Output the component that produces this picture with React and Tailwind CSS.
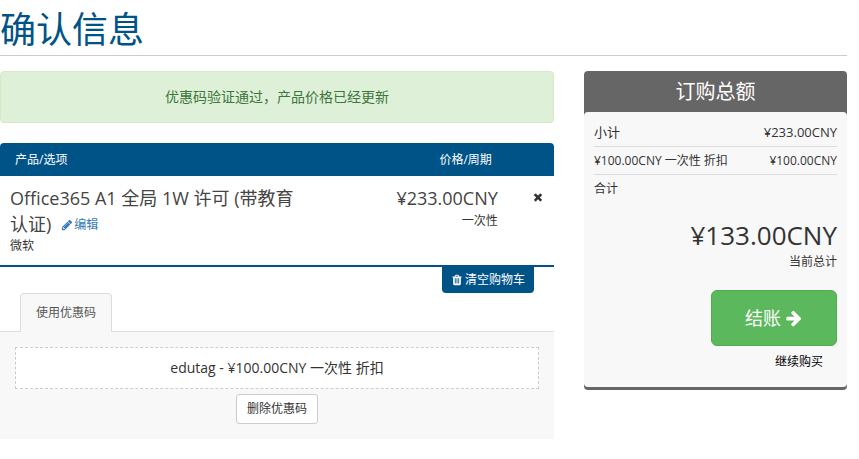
import React from 'react';

const ICONS = {
    pencil: 'M491 1536l91-91-235-235-91 91v107h128v128h107zm523-928q0-22-22-22-10 0-17 7l-542 542q-7 7-7 17 0 22 22 22 10 0 17-7l542-542q7-7 7-17zm-54-192l416 416-832 832h-416v-416zm683 96q0 53-37 90l-166 166-416-416 166-165q36-38 90-38 53 0 91 38l235 234q37 39 37 91z',
    times: 'M1490 1322q0 40-28 68l-136 136q-28 28-68 28t-68-28l-294-294-294 294q-28 28-68 28t-68-28l-136-136q-28-28-28-68t28-68l294-294-294-294q-28-28-28-68t28-68l136-136q28-28 68-28t68 28l294 294 294-294q28-28 68-28t68 28l136 136q28 28 28 68t-28 68l-294 294 294 294q28 28 28 68z',
    trash: 'M704 1376v-704q0-14-9-23t-23-9h-64q-14 0-23 9t-9 23v704q0 14 9 23t23 9h64q14 0 23-9t9-23zm256 0v-704q0-14-9-23t-23-9h-64q-14 0-23 9t-9 23v704q0 14 9 23t23 9h64q14 0 23-9t9-23zm256 0v-704q0-14-9-23t-23-9h-64q-14 0-23 9t-9 23v704q0 14 9 23t23 9h64q14 0 23-9t9-23zm-544-992h448l-48-117q-7-9-17-11h-317q-10 2-17 11zm928 32v64q0 14-9 23t-23 9h-96v948q0 83-47 143.500t-113 60.500h-832q-66 0-113-58.500t-47-141.500v-952h-96q-14 0-23-9t-9-23v-64q0-14 9-23t23-9h309l70-167q15-37 54-63t79-26h320q40 0 79 26t54 63l70 167h309q14 0 23 9t9 23z',
    arrow: 'M1600 960q0 54-37 91l-651 651q-39 37-91 37-51 0-90-37l-75-75q-38-38-38-91t38-91l293-293h-704q-52 0-84.500-37.500t-32.500-90.500v-128q0-53 32.500-90.500t84.500-37.500h704l-293-294q-38-36-38-90t38-90l75-75q38-38 90-38 53 0 91 38l651 651q37 35 37 90z',
};

const Icon = ({ name, className }) => (
    <svg viewBox="0 0 1792 1792" fill="currentColor" aria-hidden="true" className={className}>
        <path d={ICONS[name]} />
    </svg>
);

const summaryRows = [
    { label: '小计', amount: '¥233.00CNY', size: 'text-[13px]' },
    { label: '¥100.00CNY 一次性 折扣', amount: '¥100.00CNY', size: 'text-xs' },
];

const CartItems = () => (
    <section>
        <div className="grid grid-cols-12 rounded-t bg-[#005387] text-xs leading-[33px] text-white">
            <div className="col-span-7 pl-[15px]">产品/选项</div>
            <div className="col-span-4 pr-4 text-right">价格/周期</div>
        </div>
        <div className="grid grid-cols-12 border-b-2 border-[#005387] pt-[9px] pb-2.5">
            <div className="col-span-7 pl-2.5 pr-[15px]">
                <div className="text-lg leading-[26px] text-[#444]">
                    <h2 className="inline">Office365 A1 全局 1W 许可 (带教育认证)</h2>
                    <a href="#edit" className="ml-2.5 inline-flex items-center text-xs text-[#337ab7]">
                        <Icon name="pencil" className="mr-px h-3 w-3" />
                        编辑
                    </a>
                </div>
                <p className="text-xs leading-[18px]">微软</p>
            </div>
            <div className="col-span-4 pr-2.5 text-right">
                <div className="text-lg leading-[26px] text-[#444]">¥233.00CNY</div>
                <div className="text-xs leading-5">一次性</div>
            </div>
            <div className="flex items-start justify-end pr-2.5 pt-1.5">
                <button type="button" aria-label="删除">
                    <Icon name="times" className="h-3 w-3" />
                </button>
            </div>
        </div>
        <div className="flex justify-end pr-5">
            <button type="button" className="flex h-[26px] items-center rounded-b bg-[#005387] px-[9px] text-xs text-white">
                <Icon name="trash" className="mr-0.5 h-3 w-3" />
                清空购物车
            </button>
        </div>
    </section>
);

const PromoCode = () => (
    <section>
        <div role="tablist" className="flex pl-5">
            <button
                type="button"
                role="tab"
                aria-selected="true"
                className="relative -mb-px rounded-t border border-b-0 border-[#ddd] bg-[#f8f8f8] px-[15px] text-xs leading-[38px] text-[#555]"
            >
                使用优惠码
            </button>
        </div>
        <div className="border-t border-[#ddd] bg-[#f8f8f8] p-[15px] text-center">
            <div className="border border-dashed border-[#ccc] bg-white text-sm leading-10">
                edutag - ¥100.00CNY 一次性 折扣
            </div>
            <button type="button" className="mt-[5px] rounded-[3px] border border-[#ccc] bg-white px-2.5 text-xs leading-7">
                删除优惠码
            </button>
        </div>
    </section>
);

const OrderSummary = () => (
    <aside className="w-[263px] shrink-0 rounded bg-[#666] pb-[3px]">
        <h2 className="text-center text-xl leading-[41px] text-white">订购总额</h2>
        <div className="rounded bg-[#f8f8f8] px-2.5 pt-[7px] pb-4">
            {summaryRows.map((row) => (
                <div key={row.label} className={`flex justify-between border-b border-[#ddd] leading-[27px] ${row.size}`}>
                    <span>{row.label}</span>
                    <span>{row.amount}</span>
                </div>
            ))}
            <div className="text-xs leading-7">合计</div>
            <div className="mt-[15px] text-right">
                <div className="text-[26px] leading-[34px]">¥133.00CNY</div>
                <div className="text-xs leading-5">当前总计</div>
            </div>
            <div className="mt-[18px] flex flex-col items-end">
                <button type="button" className="flex h-14 items-center gap-1 rounded-md border border-[#4cae4c] bg-[#5cb85c] px-[33px] text-lg text-white">
                    结账
                    <Icon name="arrow" className="h-[18px] w-[18px]" />
                </button>
                <a href="#continue" className="mt-[7px] pr-3.5 text-xs leading-[18px] text-black">继续购买</a>
            </div>
        </div>
    </aside>
);

const App = () => (
    <main className="bg-white pr-3 font-['Open_Sans','Noto_Sans_CJK_SC',sans-serif] text-[#333]">
        <h1 className="mb-[15px] border-b border-[#ccc] pt-[10px] pb-[5px] text-4xl leading-10 text-[#005387]">
            确认信息
        </h1>
        <div className="flex items-start gap-[30px]">
            <div className="min-w-0 flex-1">
                <div role="alert" className="mb-5 rounded border border-[#d6e9c6] bg-[#dff0d8] py-[15px] text-center text-sm leading-5 text-[#3c763d]">
                    优惠码验证通过，产品价格已经更新
                </div>
                <CartItems />
                <PromoCode />
            </div>
            <OrderSummary />
        </div>
    </main>
);

export default App;
